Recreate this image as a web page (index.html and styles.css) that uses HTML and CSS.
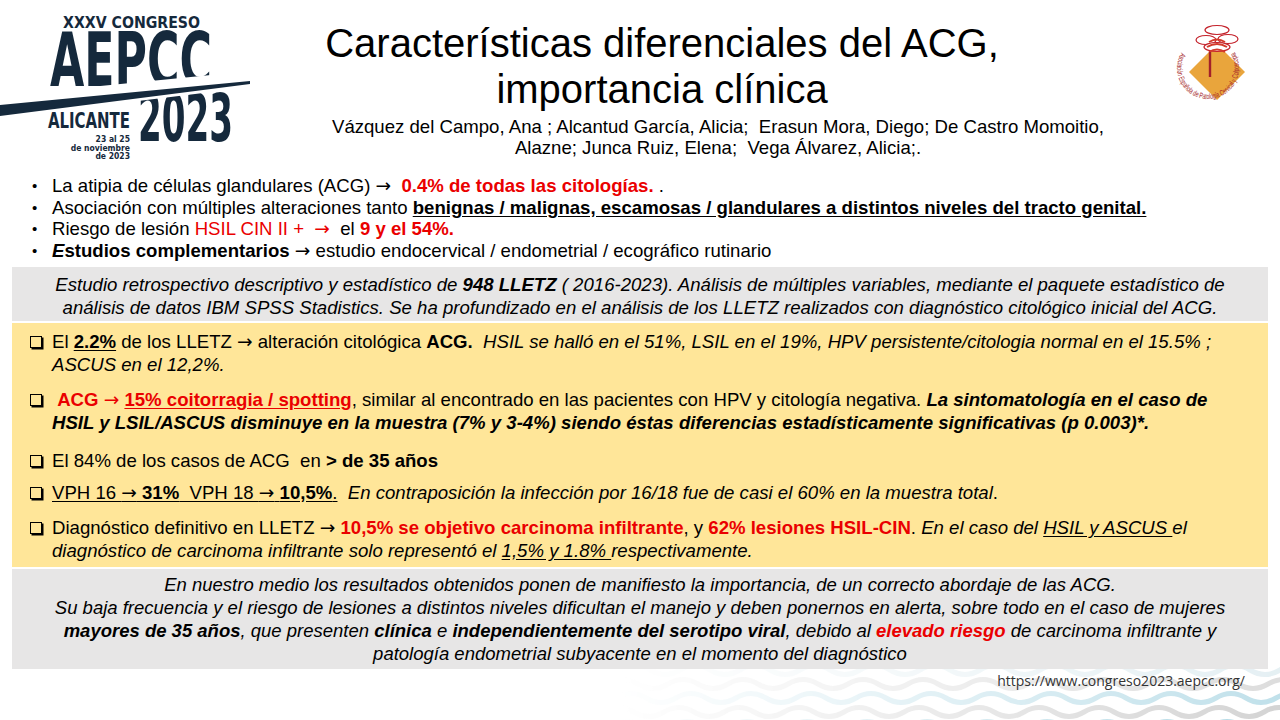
FILE: index.html
```html
<!DOCTYPE html>
<html lang="es">
<head>
<meta charset="utf-8">
<title>Características diferenciales del ACG</title>
<link rel="stylesheet" href="styles.css">
</head>
<body>
<div class="slide">
  <svg class="waves" width="660" height="70" viewBox="0 0 660 70" aria-hidden="true">
    <defs>
      <linearGradient id="fade" x1="0" x2="1" y1="0" y2="0">
        <stop offset="0" stop-color="#fff" stop-opacity="0"/>
        <stop offset="0.35" stop-color="#fff" stop-opacity="0.3"/>
        <stop offset="1" stop-color="#fff" stop-opacity="0.9"/>
      </linearGradient>
      <mask id="fademask"><rect width="660" height="70" fill="url(#fade)"/></mask>
      <path id="wv" d="M0 0 q15 -9 30 0 t30 0 t30 0 t30 0 t30 0 t30 0 t30 0 t30 0 t30 0 t30 0 t30 0 t30 0 t30 0 t30 0 t30 0 t30 0 t30 0 t30 0 t30 0 t30 0 t30 0 t30 0 t30 0"/>
    </defs>
    <g mask="url(#fademask)" fill="none" stroke-width="5" stroke-linecap="round">
      <use href="#wv" x="0" y="14" stroke="#e2eef2"/>
      <use href="#wv" x="-12" y="28" stroke="#d9d9d9"/>
      <use href="#wv" x="-4" y="42" stroke="#b9dde8"/>
      <use href="#wv" x="-16" y="56" stroke="#cfcfcf"/>
      <use href="#wv" x="-8" y="70" stroke="#a9d4e2"/>
    </g>
  </svg>

  <header class="header">
    <div class="logo-left">
      <svg width="260" height="170" viewBox="0 0 260 170" aria-label="XXXV Congreso AEPCC Alicante 2023">
        <g fill="#15293c" font-family="'DejaVu Sans Condensed','DejaVu Sans',sans-serif" font-weight="bold">
          <text x="63" y="28" font-size="16" textLength="137" lengthAdjust="spacingAndGlyphs">XXXV CONGRESO</text>
          <text x="50" y="86" font-size="74" textLength="162" lengthAdjust="spacingAndGlyphs">AEPCC</text>
          <text x="138" y="141" font-size="66" textLength="95" lengthAdjust="spacingAndGlyphs">2023</text>
          <polygon points="0,96 260,70 260,86 0,118" fill="#fff"/>
          <polygon points="0,105 250,81 250,84 0,116"/>
          <text x="48" y="128" font-size="21" textLength="82" lengthAdjust="spacingAndGlyphs">ALICANTE</text>
          <g font-size="8.5" text-anchor="end">
            <text x="130" y="142">23 al 25</text>
            <text x="130" y="150.5">de noviembre</text>
            <text x="130" y="159">de 2023</text>
          </g>
        </g>
      </svg>
    </div>

    <div class="heading">
      <h1 class="title">Características diferenciales del ACG,<br>importancia clínica</h1>
      <p class="authors">Vázquez del Campo, Ana ; Alcantud García, Alicia;&nbsp; Erasun Mora, Diego; De Castro Momoitio,<br>Alazne; Junca Ruiz, Elena;&nbsp; Vega Álvarez, Alicia;.</p>
    </div>

    <div class="logo-right">
      <svg width="90" height="100" viewBox="0 0 90 100" aria-label="Asociación Española de Patología Cervical y Colposcopia">
        <defs>
          <path id="ring" d="M16.2 37.5 A31 31 0 1 0 69.8 37.5"/>
        </defs>
        <polygon points="52,29 80,57 52,85 24,57" fill="#e9a53c"/>
        <text font-family="'Liberation Sans',sans-serif" font-size="8" fill="#a51f2a">
          <textPath href="#ring" textLength="130" lengthAdjust="spacingAndGlyphs">Asociación Española de Patología Cervical y Colposcopia</textPath>
        </text>
        <g fill="#fff" stroke="#c4222b" stroke-width="1.2">
          <ellipse cx="52" cy="15" rx="12" ry="4.5"/>
          <ellipse cx="41" cy="25" rx="10" ry="4.5"/>
          <ellipse cx="63" cy="24" rx="10" ry="4.5"/>
          <ellipse cx="52" cy="32" rx="13" ry="4.5"/>
        </g>
        <g fill="none" stroke="#d43a2a" stroke-width="2">
          <path d="M44 27 q8 -5 16 0"/>
          <path d="M42 32 q10 -6 20 0"/>
          <path d="M44 37 q8 -5 16 0"/>
        </g>
        <path d="M45 37 V62" stroke="#a3202a" stroke-width="2.4"/>
      </svg>
    </div>
  </header>

  <ul class="bullets">
    <li><span>La atipia de células glandulares (ACG) <span class="arr">→</span>&nbsp; <b class="red">0.4% de todas las citologías.</b> .</span></li>
    <li><span>Asociación con múltiples alteraciones tanto <b class="u">benignas / malignas, escamosas / glandulares a distintos niveles del tracto genital.</b></span></li>
    <li><span>Riesgo de lesión <span class="red">HSIL CIN II +&nbsp; <span class="arr">→</span>&nbsp; </span>el <b class="red">9 y el 54%.</b></span></li>
    <li><span><b><i>E</i>studios complementarios</b> <span class="arr">→</span> estudio endocervical / endometrial / ecográfico rutinario</span></li>
  </ul>

  <section class="box grey intro">
    <p>Estudio retrospectivo descriptivo y estadístico de <b>948 LLETZ</b> ( 2016-2023). Análisis de múltiples variables, mediante el paquete estadístico de<br>análisis de datos IBM SPSS Stadistics. Se ha profundizado en el análisis de los LLETZ realizados con diagnóstico citológico inicial del ACG.</p>
  </section>

  <section class="box yellow">
    <ul class="checks">
      <li>El <b class="u">2.2%</b> de los LLETZ <span class="arr">→</span> alteración citológica <b>ACG.</b>&nbsp; <i>HSIL se halló en el 51%, LSIL en el 19%, HPV persistente/citologia normal en el 15.5% ;<br>ASCUS en el 12,2%.</i></li>
      <li>&nbsp;<b class="red">ACG <span class="arr">→</span> <span class="u">15% coitorragia / spotting</span></b>, similar al encontrado en las pacientes con HPV y citología negativa. <b><i>La sintomatología en el caso de<br>HSIL y LSIL/ASCUS disminuye en la muestra (7% y 3-4%) siendo éstas diferencias estadísticamente significativas (p 0.003)*.</i></b></li>
      <li>El 84% de los casos de ACG&nbsp; en <b>&gt; de 35 años</b></li>
      <li><span class="u">VPH 16 <span class="arr">→</span> <b>31%</b>&nbsp; VPH 18 <span class="arr">→</span> <b>10,5%</b>.</span>&nbsp; <i>En contraposición la infección por 16/18 fue de casi el 60% en la muestra total</i>.</li>
      <li>Diagnóstico definitivo en LLETZ <span class="arr">→</span> <b class="red">10,5% se objetivo carcinoma infiltrante</b>, y <b class="red">62% lesiones HSIL-CIN</b>. <i>En el caso del <span class="u">HSIL y ASCUS </span>el<br>diagnóstico de carcinoma infiltrante solo representó el <span class="u">1,5% y 1.8% </span>respectivamente.</i></li>
    </ul>
  </section>

  <section class="box grey concl">
    <p>En nuestro medio los resultados obtenidos ponen de manifiesto la importancia, de un correcto abordaje de las ACG.<br>Su baja frecuencia y el riesgo de lesiones a distintos niveles dificultan el manejo y deben ponernos en alerta, sobre todo en el caso de mujeres<br><b>mayores de 35 años</b>, que presenten <b>clínica</b> e <b>independientemente del serotipo viral</b>, debido al <b class="red">elevado riesgo</b> de carcinoma infiltrante y<br>patología endometrial subyacente en el momento del diagnóstico</p>
  </section>

  <footer class="url">https://www.congreso2023.aepcc.org/</footer>
</div>
</body>
</html>
```

FILE: styles.css
```css
* { box-sizing: border-box; }

html, body {
  margin: 0;
  padding: 0;
  background: #fff;
}

.slide {
  position: relative;
  width: 1280px;
  height: 720px;
  overflow: hidden;
  font-family: "Liberation Sans", Arial, sans-serif;
  color: #000;
}

.waves {
  position: absolute;
  left: 620px;
  top: 656px;
  z-index: 0;
}

.header {
  position: relative;
  z-index: 1;
  display: flex;
  height: 175px;
}

.logo-left {
  width: 260px;
  flex: none;
}
.logo-left svg { display: block; }

.heading {
  flex: 1;
  display: flex;
  flex-direction: column;
}

.title {
  margin: 20px 0 0;
  padding-right: 96px;
  font-weight: normal;
  font-size: 40px;
  line-height: 46px;
  text-align: center;
}

.authors {
  margin: 4px 0 0;
  padding-left: 16px;
  font-size: 18.6px;
  line-height: 21px;
  text-align: center;
}

.logo-right {
  width: 120px;
  flex: none;
  padding: 15px 0 0 5px;
}
.logo-right svg { display: block; }

.red { color: #ea0000; }
.u { text-decoration: underline; text-underline-offset: 2px; }
.arr {
  font-family: "DejaVu Sans", sans-serif;
  font-weight: normal;
  font-size: 1em;
  line-height: 0;
}

.bullets {
  position: relative;
  z-index: 1;
  list-style: none;
  margin: 0;
  padding: 0 0 0 28px;
  font-size: 18.6px;
  line-height: 21.5px;
}
.bullets li {
  display: grid;
  grid-template-columns: 24px 1fr;
}
.bullets li::before {
  content: "•";
  font-size: 15px;
  padding-left: 4px;
}

.box {
  position: relative;
  z-index: 1;
  margin: 0 12px;
}
.box p { margin: 0; }

.grey { background: #e7e6e6; }
.yellow { background: #ffe699; }

.intro {
  margin-top: 6px;
  padding: 5.5px 10px 2px;
  font-size: 18.6px;
  line-height: 23px;
  font-style: italic;
  text-align: center;
}

.yellow {
  margin-top: 2px;
  padding: 7px 10px 5px 0;
}

.checks {
  list-style: none;
  margin: 0;
  padding: 0 0 0 40px;
  font-size: 18.6px;
  line-height: 23px;
}
.checks li {
  position: relative;
  margin-bottom: 12px;
}
.checks li:nth-child(2) { margin-bottom: 15px; }
.checks li:nth-child(3) { margin-bottom: 9px; }
.checks li:last-child { margin-bottom: 0; }
.checks li::before {
  content: "";
  position: absolute;
  left: -22px;
  top: 6px;
  width: 10px;
  height: 10px;
  border: 1.3px solid #000;
  box-shadow: 1.5px 1.5px 0 #000;
}

.concl {
  margin-top: 2px;
  padding: 4.5px 10px 4px;
  font-size: 18.5px;
  line-height: 23px;
  font-style: italic;
  text-align: center;
}

.url {
  position: relative;
  z-index: 1;
  margin-top: 2px;
  padding-right: 35px;
  text-align: right;
  font-family: "Open Sans", sans-serif;
  font-size: 14px;
  line-height: 20px;
  color: #333;
}
```
